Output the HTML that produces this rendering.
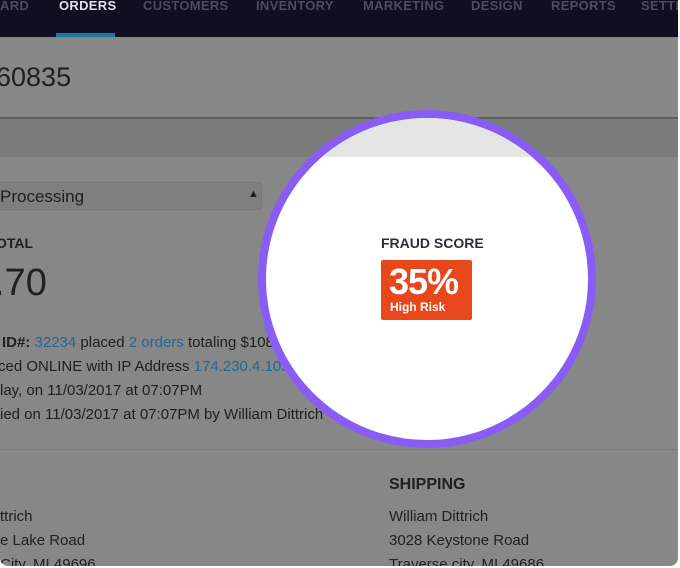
<!DOCTYPE html>
<html><head><style>
*{margin:0;padding:0;box-sizing:border-box}
body{width:680px;height:568px;background:#fff;overflow:hidden;position:relative;font-family:"Liberation Sans",sans-serif}
#frame{position:absolute;left:0;top:0;width:678px;height:566px;background:#878787;border-radius:0 0 8px 8px;overflow:hidden}
.nav{position:absolute;left:0;top:0;width:678px;height:37px;background:#110e22}
.nav span{position:absolute;top:-2px;font-size:13px;font-weight:bold;color:#4d4b5e;letter-spacing:.3px}
.t{position:absolute;white-space:nowrap;color:#202020}
.l{color:#1d6a99}
.circ{position:absolute;left:258px;top:110px;width:338px;height:338px;border-radius:50%;border:8px solid #8a5cf6;background:#fff;overflow:hidden}
</style></head><body>
<div id="frame">
<div class="nav">
<span style="left:0">ARD</span>
<span style="left:59px;color:#e0e0e6">ORDERS</span>
<span style="left:143px">CUSTOMERS</span>
<span style="left:256px">INVENTORY</span>
<span style="left:363px">MARKETING</span>
<span style="left:471px">DESIGN</span>
<span style="left:551px">REPORTS</span>
<span style="left:641px">SETTI</span>
<div style="position:absolute;left:56px;top:33px;width:59px;height:4px;background:#1b7aa0"></div>
</div>
<div class="t" style="left:-4px;top:62px;font-size:27px">60835</div>
<div style="position:absolute;left:0;top:117px;width:678px;height:2px;background:#5c5c5c"></div>
<div style="position:absolute;left:0;top:119px;width:678px;height:38px;background:#7c7c7c"></div>
<div style="position:absolute;left:-6px;top:182px;width:268px;height:28px;background:#7f7f7f;border-radius:3px;border:1px solid #767676"></div>
<div class="t" style="left:0;top:187px;font-size:17px">Processing</div>
<div class="t" style="left:248px;top:188px;font-size:11px">&#9650;</div>
<div class="t" style="left:-4px;top:235px;font-size:14px;font-weight:bold">OTAL</div>
<div class="t" style="left:-6px;top:262px;font-size:38px">.70</div>
<div class="t" style="left:2px;top:334px;font-size:15px"><b>ID#:</b> <span class="l">32234</span> placed <span class="l">2 orders</span> totaling $108.00.</div>
<div class="t" style="left:-2px;top:358px;font-size:15px">ced ONLINE with IP Address <span class="l">174.230.4.105 &#10697;</span>.</div>
<div class="t" style="left:0;top:382px;font-size:15px">lay, on 11/03/2017 at 07:07PM</div>
<div class="t" style="left:0;top:406px;font-size:15px">ied on 11/03/2017 at 07:07PM by William Dittrich</div>
<div style="position:absolute;left:0;top:449px;width:678px;height:1px;background:#7a7a7a"></div>
<div class="t" style="left:389px;top:476px;font-size:16px;font-weight:bold">SHIPPING</div>
<div class="t" style="left:0;top:508px;font-size:15px">ttrich</div>
<div class="t" style="left:0;top:532px;font-size:15px">e Lake Road</div>
<div class="t" style="left:0;top:556px;font-size:15px">City, MI 49696</div>
<div class="t" style="left:389px;top:508px;font-size:15px">William Dittrich</div>
<div class="t" style="left:389px;top:532px;font-size:15px">3028 Keystone Road</div>
<div class="t" style="left:389px;top:556px;font-size:15px">Traverse city, MI 49686</div>
<div class="circ">
<div style="position:absolute;left:0;top:0;width:340px;height:39px;background:#e5e5e5"></div>
<div class="t" style="left:115px;top:117px;font-size:14px;font-weight:bold;color:#2a2f3a">FRAUD SCORE</div>
<div style="position:absolute;left:115px;top:142px;width:91px;height:60px;background:#e8471c;border-radius:2px">
<div class="t" style="left:8px;top:1px;font-size:36px;font-weight:bold;color:#fff;letter-spacing:-1px">35%</div>
<div class="t" style="left:9px;top:40px;font-size:12px;font-weight:bold;color:#fff">High Risk</div>
</div>
</div>
</div>
</body></html>
